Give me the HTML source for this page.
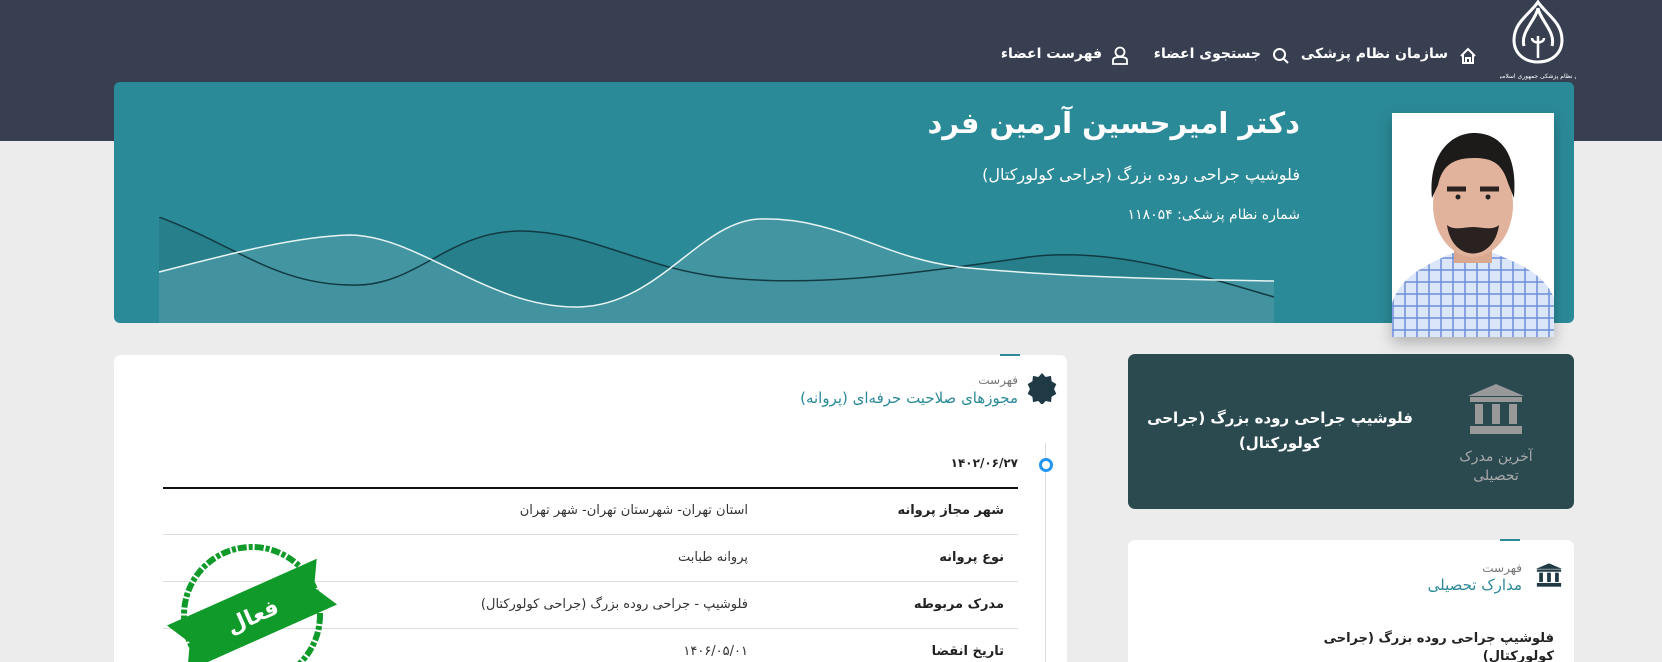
<!DOCTYPE html>
<html lang="fa" dir="rtl" style="overflow:hidden;height:662px"><head><meta charset="utf-8">
<style>
*{margin:0;padding:0;box-sizing:border-box}
html,body{overflow:hidden}
body{width:1662px;height:662px;background:#ececec;font-family:"DejaVu Sans",sans-serif;position:relative}
.a{position:absolute}
.hdr{left:0;top:0;width:1662px;height:141px;background:#373f51}
.nav{color:#fff;font-size:14px;font-weight:bold;white-space:nowrap}
.banner{left:114px;top:82px;width:1460px;height:241px;background:#2b8a98;border-radius:6px;overflow:hidden}
.t{color:#fff;white-space:nowrap;text-align:right}
.card{background:#fff;border-radius:7px 7px 0 0}
.lbl{font-size:13px;font-weight:bold;color:#222;white-space:nowrap}
.val{font-size:13px;color:#333;white-space:nowrap}
.sep{height:1px;background:#ddd;left:163px;width:855px}
</style></head><body>
<div class="a hdr"></div>
<svg class="a" style="left:1500px;top:0" width="76" height="84" viewBox="0 0 76 84">
<path d="M38 2 C30 14 14 22 14 40 C14 54 25 62 38 62 C51 62 62 54 62 40 C62 22 46 14 38 2Z" fill="none" stroke="#fff" stroke-width="3"/>
<path d="M24 46 C20 32 36 20 38 8 M52 46 C56 32 40 20 38 8" fill="none" stroke="#fff" stroke-width="3"/>
<path d="M38 36 L38 58 M32 38 C32 44 44 44 44 38" fill="none" stroke="#fff" stroke-width="2.5"/>
<text x="38" y="78" fill="#fff" font-size="6" text-anchor="middle" font-family="DejaVu Sans">سازمان نظام پزشکی جمهوری اسلامی ایران</text>
</svg>
<svg class="a" style="left:1459px;top:47px" width="18" height="18" viewBox="0 0 18 18"><path d="M2 9 L9 2 L16 9 M4 7 V16 H14 V7 M7 16 V11 H11 V16" fill="none" stroke="#fff" stroke-width="2"/></svg>
<div class="a nav" style="right:214px;top:46px">سازمان نظام پزشکی</div>
<svg class="a" style="left:1272px;top:47px" width="18" height="18" viewBox="0 0 18 18"><circle cx="7.5" cy="7.5" r="5.5" fill="none" stroke="#fff" stroke-width="2"/><path d="M11.5 11.5 L16 16" stroke="#fff" stroke-width="2"/></svg>
<div class="a nav" style="right:401px;top:46px">جستجوی اعضاء</div>
<svg class="a" style="left:1111px;top:46px" width="18" height="19" viewBox="0 0 18 19"><circle cx="9" cy="6" r="4.5" fill="none" stroke="#fff" stroke-width="1.8"/><path d="M2 18 V14 C2 12 5 11 9 11 C13 11 16 12 16 14 V18 Z" fill="none" stroke="#fff" stroke-width="1.8"/></svg>
<div class="a nav" style="right:560px;top:46px">فهرست اعضاء</div>

<div class="a banner">
<svg class="a" style="left:45px;top:135px" width="1115" height="106" viewBox="0 0 1115 106">
<path d="M0 0 C80 30 120 70 200 68 C260 66 290 15 360 14 C430 14 480 50 560 60 C650 70 730 60 870 40 C950 30 1030 55 1115 80 V106 H0Z" fill="#267f8a"/>
<path d="M0 55 C60 40 130 20 190 18 C260 18 330 92 420 90 C500 88 540 5 600 2 C680 0 720 40 800 50 C900 60 1000 62 1115 64 V106 H0Z" fill="#4a99a4" opacity="0.8"/>
<path d="M0 0 C80 30 120 70 200 68 C260 66 290 15 360 14 C430 14 480 50 560 60 C650 70 730 60 870 40 C950 30 1030 55 1115 80" fill="none" stroke="#123a42" stroke-width="1.5"/>
<path d="M0 55 C60 40 130 20 190 18 C260 18 330 92 420 90 C500 88 540 5 600 2 C680 0 720 40 800 50 C900 60 1000 62 1115 64" fill="none" stroke="#e8f4f4" stroke-width="1.5"/>
</svg>
</div>
<div class="a t" style="right:362px;top:106px;font-size:29px;font-weight:bold">دکتر امیرحسین آرمین فرد</div>
<div class="a t" style="right:362px;top:165px;font-size:16px">فلوشیپ جراحی روده بزرگ (جراحی کولورکتال)</div>
<div class="a t" style="right:362px;top:207px;font-size:14px">شماره نظام پزشکی: ۱۱۸۰۵۴</div>
<div class="a" style="left:1392px;top:113px;width:162px;height:224px;background:#fff;box-shadow:0 6px 14px rgba(0,0,0,.25);overflow:hidden">
<svg width="162" height="224" viewBox="0 0 162 224">
<defs><pattern id="ch" width="12" height="12" patternUnits="userSpaceOnUse"><rect width="12" height="12" fill="#dbe6fb"/><path d="M0 1 H12 M1 0 V12" stroke="#6f8fd8" stroke-width="1.5"/></pattern></defs>
<path d="M0 190 C10 160 40 150 60 140 L102 140 C125 150 152 160 162 185 V224 H0Z" fill="url(#ch)"/>
<rect x="62" y="120" width="38" height="30" fill="#d9a88e"/>
<ellipse cx="81" cy="92" rx="40" ry="52" fill="#e2b39c"/>
<path d="M40 85 C36 40 60 20 82 20 C108 20 126 40 122 85 L116 70 C110 50 100 45 82 45 C62 45 50 52 46 72Z" fill="#1d1a1a"/>
<path d="M55 112 C60 150 102 150 107 112 C100 118 90 114 81 114 C72 114 62 118 55 112Z" fill="#2a2220"/>
<path d="M55 76 H74 M88 76 H107" stroke="#2a2220" stroke-width="5"/>
<circle cx="66" cy="84" r="2.5" fill="#222"/><circle cx="96" cy="84" r="2.5" fill="#222"/>
</svg></div>

<div class="a card" style="left:114px;top:355px;width:953px;height:307px"></div>
<div class="a" style="left:1000px;top:354px;width:20px;height:2px;background:#2b8a98"></div>
<svg class="a" style="left:1026px;top:372px" width="32" height="32" viewBox="-16 -16 32 32"><polygon fill="#1f3a44" points="0,-15 3.6,-11 9,-12.1 9.6,-6.8 14.3,-3.9 12.1,1 14.3,5.9 9.6,8.8 9,14.1 3.6,13 0,17 -3.6,13 -9,14.1 -9.6,8.8 -14.3,5.9 -12.1,1 -14.3,-3.9 -9.6,-6.8 -9,-12.1 -3.6,-11"/></svg>
<div class="a" style="right:644px;top:373px;font-size:12px;color:#777">فهرست</div>
<div class="a" style="right:644px;top:389px;font-size:15px;color:#2b8a98;white-space:nowrap">مجوزهای صلاحیت حرفه‌ای (پروانه)</div>
<div class="a" style="left:1045px;top:443px;width:1px;height:219px;background:#ddd"></div>
<div class="a" style="left:1039px;top:458px;width:14px;height:14px;border:3px solid #2196f3;border-radius:50%;background:#fff"></div>
<div class="a" style="right:644px;top:456px;font-size:12px;font-weight:bold;color:#222">۱۴۰۲/۰۶/۲۷</div>
<div class="a" style="left:163px;top:487px;width:855px;height:2px;background:#111"></div>
<div class="a sep" style="top:534px"></div>
<div class="a sep" style="top:581px"></div>
<div class="a sep" style="top:628px"></div>
<div class="a lbl" style="right:658px;top:503px">شهر مجاز پروانه</div>
<div class="a val" style="right:914px;top:503px">استان تهران- شهرستان تهران- شهر تهران</div>
<div class="a lbl" style="right:658px;top:550px">نوع پروانه</div>
<div class="a val" style="right:914px;top:550px">پروانه طبابت</div>
<div class="a lbl" style="right:658px;top:597px">مدرک مربوطه</div>
<div class="a val" style="right:914px;top:597px">فلوشیپ - جراحی روده بزرگ (جراحی کولورکتال)</div>
<div class="a lbl" style="right:658px;top:644px">تاریخ انقضا</div>
<div class="a val" style="right:914px;top:644px">۱۴۰۶/۰۵/۰۱</div>
<svg class="a" style="left:160px;top:535px" width="190" height="127" viewBox="0 0 190 127">
<circle cx="92" cy="80" r="68" fill="none" stroke="#0f9a2a" stroke-width="6" stroke-dasharray="9 2 4 2"/>
<g transform="rotate(-24 92 80)"><polygon points="10,55 174,55 160,80 174,105 10,105 24,80" fill="#0f9a2a"/>
<text x="92" y="89" fill="#fff" font-size="22" font-weight="bold" text-anchor="middle" font-family="DejaVu Sans">فعال</text></g>
</svg>

<div class="a" style="left:1128px;top:354px;width:446px;height:155px;background:#2b4a50;border-radius:7px"></div>
<svg class="a" style="left:1466px;top:382px" width="60" height="54" viewBox="0 0 60 54"><polygon points="30,2 58,14 2,14" fill="#999"/><rect x="4" y="15" width="52" height="5" fill="#999"/><rect x="9" y="22" width="8" height="20" fill="#999"/><rect x="26" y="22" width="8" height="20" fill="#999"/><rect x="43" y="22" width="8" height="20" fill="#999"/><rect x="4" y="44" width="52" height="8" fill="#999"/></svg>
<div class="a" style="left:1446px;top:448px;width:100px;text-align:center;font-size:14px;color:#aaa;line-height:19px">آخرین مدرک<br>تحصیلی</div>
<div class="a" style="left:1130px;top:406px;width:300px;text-align:center;font-size:15px;font-weight:bold;color:#fff;line-height:25px;white-space:nowrap">فلوشیپ جراحی روده بزرگ (جراحی<br>کولورکتال)</div>

<div class="a card" style="left:1128px;top:540px;width:446px;height:122px"></div>
<div class="a" style="left:1500px;top:539px;width:20px;height:2px;background:#2b8a98"></div>
<svg class="a" style="left:1535px;top:562px" width="28" height="26" viewBox="0 0 60 54"><polygon points="30,2 58,14 2,14" fill="#1f3a44"/><rect x="4" y="15" width="52" height="5" fill="#1f3a44"/><rect x="9" y="22" width="8" height="20" fill="#1f3a44"/><rect x="26" y="22" width="8" height="20" fill="#1f3a44"/><rect x="43" y="22" width="8" height="20" fill="#1f3a44"/><rect x="4" y="44" width="52" height="8" fill="#1f3a44"/></svg>
<div class="a" style="right:140px;top:561px;font-size:12px;color:#777">فهرست</div>
<div class="a" style="right:140px;top:576px;font-size:15px;color:#2b8a98">مدارک تحصیلی</div>
<div class="a" style="right:108px;top:630px;font-size:13px;font-weight:bold;color:#222;line-height:18px;text-align:right">فلوشیپ جراحی روده بزرگ (جراحی<br>کولورکتال)</div>
</body></html>
